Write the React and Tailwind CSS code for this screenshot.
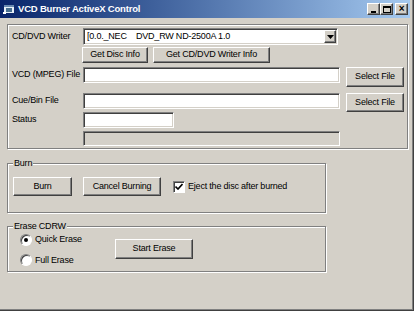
import React from "react";

const raised =
  "border border-t-white border-l-white border-r-[#404040] border-b-[#404040] shadow-[inset_-1px_-1px_0_#808080] bg-[#d4d0c8]";
const sunken =
  "border border-t-[#808080] border-l-[#808080] border-r-white border-b-white shadow-[inset_1px_1px_0_#404040,inset_-1px_-1px_0_#d4d0c8]";
const etched = "border border-[#808080] shadow-[inset_1px_1px_0_#fff,1px_1px_0_#fff]";

const Btn = ({ children, className = "" }) => (
  <button className={`${raised} flex items-center justify-center text-black whitespace-nowrap ${className}`}>{children}</button>
);

const Field = ({ className = "", children, disabled }) => (
  <div className={`${sunken} ${disabled ? "bg-[#d4d0c8]" : "bg-white"} flex items-center ${className}`}>{children}</div>
);

const Group = ({ label, className = "", children }) => (
  <div className={`relative ${etched} ${className}`}>
    <span className="absolute -top-[7px] left-[5px] bg-[#d4d0c8] px-[1px] leading-[12px]">{label}</span>
    {children}
  </div>
);

const Radio = ({ checked }) => (
  <span className="w-[12px] h-[12px] rounded-full bg-white border border-t-[#808080] border-l-[#808080] border-r-white border-b-white shadow-[inset_1px_1px_0_#404040] flex items-center justify-center">
    {checked && <span className="w-[4px] h-[4px] rounded-full bg-black" />}
  </span>
);

export default function App() {
  return (
    <div
      className="w-[414px] h-[311px] bg-[#d4d0c8] border-r border-b border-r-[#404040] border-b-[#404040] shadow-[inset_-1px_-1px_0_#808080] text-[9px] tracking-[-0.2px] text-black overflow-hidden whitespace-nowrap"
      style={{ fontFamily: '"Liberation Sans", Arial, sans-serif' }}
    >
      {/* title bar */}
      <div className="w-[410px] h-[18px] flex items-center bg-gradient-to-r from-[#0a246a] to-[#a6caf0] pl-[3px] pr-[2px]">
        <svg width="13" height="12" viewBox="0 0 13 12" className="mr-[2px]">
          <rect x="1" y="2" width="10" height="8" fill="#e8f0f8" />
          <rect x="1" y="2" width="10" height="2" fill="#6a8ab0" />
          <rect x="3" y="5" width="6" height="4" fill="#4a7090" />
          <rect x="0" y="9" width="3" height="2" fill="#fff" />
        </svg>
        <span className="font-bold text-white text-[9.5px] tracking-[-0.2px]">VCD Burner ActiveX Control</span>
        <div className="ml-auto flex items-center">
          <Btn className="w-[13px] h-[12px]">
            <span className="block w-[5px] h-[2px] bg-black mt-[5px] -ml-[1px]" />
          </Btn>
          <Btn className="w-[13px] h-[12px]">
            <span className="block w-[8px] h-[7px] border border-black border-t-2" />
          </Btn>
          <Btn className="w-[13px] h-[12px] ml-[2px] font-bold text-[10px] leading-none">×</Btn>
        </div>
      </div>

      {/* top panel */}
      <div className={`${etched} mt-[6px] ml-[7px] w-[401px] h-[125px] pt-[3px] pl-[4px]`}>
        <div className="flex h-[17px]">
          <span className="w-[71px] pt-[2px]">CD/DVD Writer</span>
          <Field className="w-[255px] h-[17px] pl-[3px] pr-[1px]">
            <span className="whitespace-pre flex-1">{"[0.0._NEC    DVD_RW ND-2500A 1.0"}</span>
            <Btn className="w-[12px] h-[13px]">
              <svg width="7" height="4" viewBox="0 0 7 4"><path d="M0 0h7L3.5 4z" fill="#000" /></svg>
            </Btn>
          </Field>
        </div>
        <div className="flex h-[16px] mt-[2px] ml-[70px] gap-[5px]">
          <Btn className="w-[66px] h-[16px]">Get Disc Info</Btn>
          <Btn className="w-[117px] h-[16px]">Get CD/DVD Writer Info</Btn>
        </div>
        <div className="flex h-[20px] mt-[4px]">
          <span className="w-[71px] pt-[1px]">VCD (MPEG) File</span>
          <Field className="w-[257px] h-[16px]" />
          <Btn className="w-[58px] h-[20px] ml-[6px]">Select File</Btn>
        </div>
        <div className="flex h-[19px] mt-[6px]">
          <span className="w-[71px] pt-[1px]">Cue/Bin File</span>
          <Field className="w-[257px] h-[16px]" />
          <Btn className="w-[58px] h-[19px] ml-[6px]">Select File</Btn>
        </div>
        <div className="flex h-[16px]">
          <span className="w-[71px] pt-[1px]">Status</span>
          <Field className="w-[91px] h-[16px]" />
        </div>
        <div className="flex h-[15px] mt-[3px] ml-[71px]">
          <Field disabled className="w-[257px] h-[15px]" />
        </div>
      </div>

      {/* burn group */}
      <Group label="Burn" className="mt-[14px] ml-[7px] w-[319px] h-[50px]">
        <div className="flex items-center mt-[13px] ml-[5px]">
          <Btn className="w-[59px] h-[19px]">Burn</Btn>
          <Btn className="w-[78px] h-[19px] ml-[11px]">Cancel Burning</Btn>
          <span className="ml-[12px] w-[12px] h-[12px] bg-white border border-t-[#808080] border-l-[#808080] border-r-white border-b-white shadow-[inset_1px_1px_0_#404040] flex items-center justify-center">
            <svg width="8" height="7" viewBox="0 0 8 7"><path d="M0.5 3.5l2.5 2.5 4.5-5" stroke="#000" strokeWidth="1.6" fill="none" /></svg>
          </span>
          <span className="ml-[3px]">Eject the disc after burned</span>
        </div>
      </Group>

      {/* erase group */}
      <Group label="Erase CDRW" className="mt-[13px] ml-[7px] w-[319px] h-[46px]">
        <div className="flex items-start mt-[6px] ml-[12px]">
          <div className="w-[95px] flex flex-col gap-[7px]">
            <div className="flex items-center gap-[3px]">
              <Radio checked />
              <span>Quick Erase</span>
            </div>
            <div className="flex items-center gap-[3px]">
              <Radio />
              <span>Full Erase</span>
            </div>
          </div>
          <Btn className="w-[78px] h-[20px] mt-[6px]">Start Erase</Btn>
        </div>
      </Group>
    </div>
  );
}
